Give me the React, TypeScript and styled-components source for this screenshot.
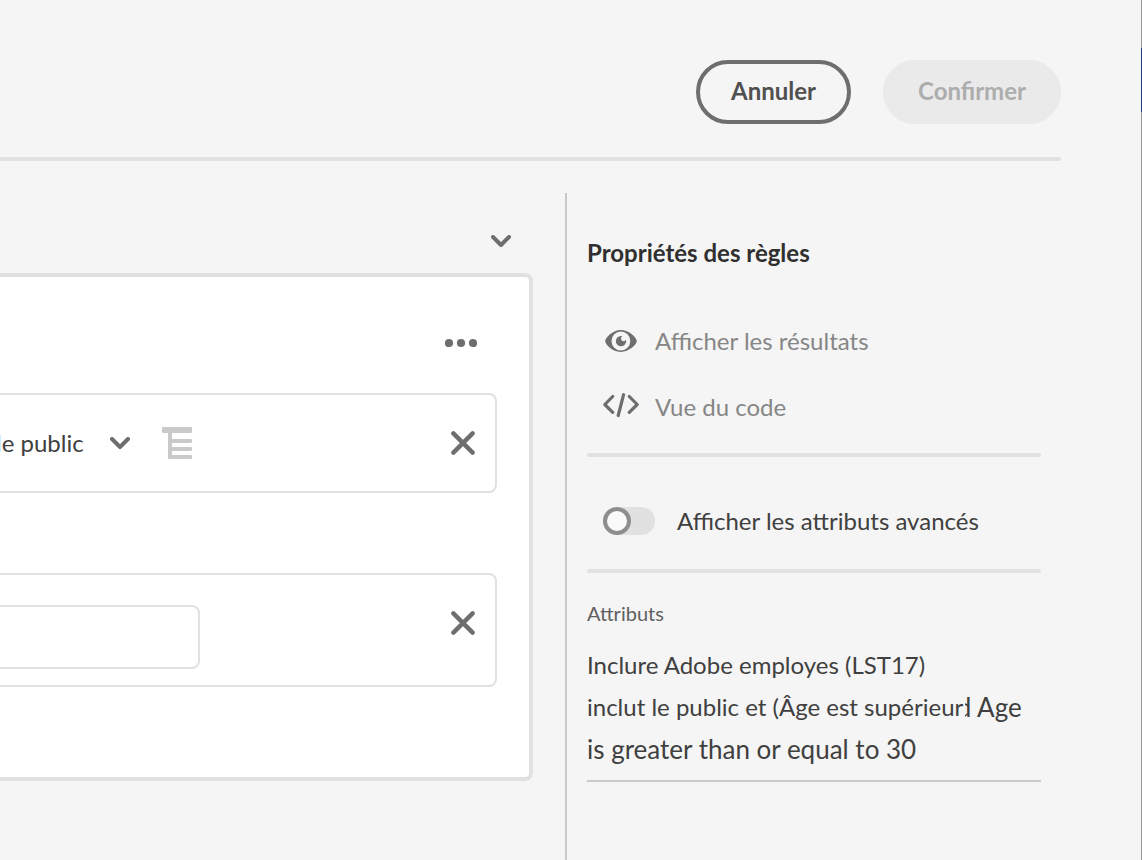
import React, { useState } from "react";
import styled, { createGlobalStyle } from "styled-components";

const GlobalStyle = createGlobalStyle`
  *, *::before { box-sizing: border-box; }
  body {
    margin: 0;
    background: #f5f5f5;
    color: #404040;
    font: 400 24px/32px Lato, "Open Sans", sans-serif;
  }
  button, input, select { font: inherit; color: inherit; margin: 0; }
`;

const Page = styled.div`
  display: flex;
  min-height: 100vh;
  overflow-x: hidden;
`;

const Content = styled.div`
  flex: 1;
  min-width: 0;
  display: flex;
  flex-direction: column;
  padding-right: 80px;
`;

const WindowEdge = styled.div`
  width: 1px;
  padding-top: 48px;
  background: #969696;
`;

const EdgeMarker = styled.div`
  height: 64px;
  background: #1d427c;
`;

const Header = styled.header`
  display: flex;
  justify-content: flex-end;
  gap: 32px;
  padding: 60px 0 33px;
`;

const ActionButton = styled.button<{ $width: number }>`
  width: ${(p) => p.$width}px;
  height: 64px;
  padding: 0 0 2px;
  border: 4px solid #6e6e6e;
  border-radius: 32px;
  background: transparent;
  color: #505050;
  font-weight: 700;
  cursor: pointer;

  &:disabled {
    border-color: #eaeaea;
    background: #eaeaea;
    color: #adadad;
    cursor: default;
  }
`;

const Rule = styled.hr<{ $bleed?: boolean }>`
  width: 100%;
  height: 4px;
  margin: 0;
  border: 0;
  border-radius: ${(p) => (p.$bleed ? "0 2px 2px 0" : "2px")};
  background: #e1e1e1;
`;

const Columns = styled.div`
  flex: 1;
  display: flex;
  gap: 32px;
  padding: 32px 20px 0 0;
`;

const Canvas = styled.main`
  flex: 1;
  min-width: 0;
`;

const IconButton = styled.button`
  display: flex;
  padding: 0;
  border: 0;
  background: none;
  color: #6e6e6e;
  cursor: pointer;
`;

const CanvasHeader = styled.div`
  display: flex;
  justify-content: flex-end;
  height: 80px;
  padding: 42px 22px 0 0;
  align-items: flex-start;
`;

const Card = styled.section`
  display: flex;
  flex-direction: column;
  height: 508px;
  margin-left: -4px;
  padding-right: 32px;
  border: 4px solid #e1e1e1;
  border-left: 0;
  border-radius: 0 8px 8px 0;
  background: #fff;
`;

const CardHeader = styled.div`
  display: flex;
  justify-content: flex-end;
  align-items: flex-start;
  height: 116px;
  padding: 61px 20px 0 0;
`;

const RuleRow = styled.div<{ $height: number }>`
  display: flex;
  align-items: flex-start;
  justify-content: space-between;
  height: ${(p) => p.$height}px;
  padding: 30px 20px 0 0;
  border: 2px solid #e1e1e1;
  border-left: 0;
  border-radius: 0 8px 8px 0;

  & + & {
    margin-top: 80px;
  }

  > button {
    padding: 6px 0;
  }
`;

const RowFields = styled.div`
  display: flex;
  align-items: center;
  gap: 32px;
`;

const SelectBox = styled.div`
  display: grid;
  align-items: center;
  width: 134px;
  color: #6e6e6e;

  > * {
    grid-area: 1 / 1;
  }

  svg {
    justify-self: end;
    pointer-events: none;
  }
`;

const Select = styled.select`
  appearance: none;
  width: 100%;
  height: 36px;
  padding: 0;
  border: 0;
  background: none;
  color: #404040;
`;

const ValueInput = styled.input`
  width: 204px;
  height: 64px;
  padding: 0 16px;
  border: 2px solid #e1e1e1;
  border-left: 0;
  border-radius: 0 8px 8px 0;
  background: #fff;
`;

const Sidebar = styled.aside`
  width: 476px;
  padding: 44px 0 0 20px;
  border-left: 2px solid #cacaca;
`;

const Title = styled.h2`
  margin: 0 0 56px;
  color: #303030;
  font-size: 24px;
  font-weight: 700;
`;

const LinkList = styled.nav`
  display: flex;
  flex-direction: column;
  gap: 34px;
  padding: 0 0 30px 16px;
`;

const PanelLink = styled.a`
  display: flex;
  align-items: center;
  gap: 16px;
  color: #868686;
  text-decoration: none;

  svg {
    color: #6e6e6e;
  }
`;

const ToggleRow = styled.label`
  display: flex;
  align-items: center;
  gap: 22px;
  padding: 48px 0 32px 16px;
`;

const Toggle = styled.input`
  appearance: none;
  width: 52px;
  height: 28px;
  border-radius: 14px;
  background: #e1e1e1;
  cursor: pointer;

  &::before {
    content: "";
    display: block;
    width: 28px;
    height: 28px;
    border: 4px solid #8e8e8e;
    border-radius: 50%;
    background: #fafafa;
  }

  &:checked::before {
    margin-left: auto;
  }
`;

const Caption = styled.h3`
  margin: 28px 0 19px;
  color: #606060;
  font-size: 20px;
  font-weight: 400;
  line-height: 24px;
`;

const Summary = styled.div`
  padding-bottom: 10px;
  border-bottom: 2px solid #cacaca;
  line-height: 42px;
`;

const SummaryLine = styled.div`
  display: flex;
  height: 42px;
  white-space: pre;
`;

const Large = styled.span`
  font-size: 26px;
`;

const CutLetter = styled.span`
  display: flex;
  justify-content: flex-end;
  width: 6px;
  margin-left: 2px;
  overflow: hidden;
  font-size: 26px;
`;

const Chevron = () => (
  <svg width="20" height="12" viewBox="0 0 20 12" fill="none" stroke="currentColor" strokeWidth="4" strokeLinecap="round" strokeLinejoin="round" aria-hidden="true">
    <path d="M2 2l8 8 8-8" />
  </svg>
);

const Cross = () => (
  <svg width="24" height="24" viewBox="0 0 24 24" fill="none" stroke="currentColor" strokeWidth="4.4" strokeLinecap="round" aria-hidden="true">
    <path d="M2.4 2.4l19.2 19.2M21.6 2.4L2.4 21.6" />
  </svg>
);

const Dots = () => (
  <svg width="32" height="10" viewBox="0 0 32 10" fill="currentColor" aria-hidden="true">
    <circle cx="4" cy="5" r="4.1" />
    <circle cx="16" cy="5" r="4.1" />
    <circle cx="28" cy="5" r="4.1" />
  </svg>
);

const Tree = () => (
  <svg width="30" height="32" viewBox="0 0 30 32" fill="#cacaca" aria-hidden="true">
    <rect width="30" height="6" rx="1" />
    <path d="M6 4h4v8h19a1 1 0 0 1 1 1v2a1 1 0 0 1-1 1H10v4h19a1 1 0 0 1 1 1v2a1 1 0 0 1-1 1H10v4h19a1 1 0 0 1 1 1v2a1 1 0 0 1-1 1H7a1 1 0 0 1-1-1z" />
  </svg>
);

const Eye = () => (
  <svg width="36" height="24" viewBox="0 0 36 24" aria-hidden="true">
    <path
      fill="currentColor"
      fillRule="evenodd"
      d="M17.7 1C9.6 1 2.2 8.8 2.2 12.1 2.2 15.6 9.5 23 17.7 23 26 23 33.8 15.5 33.8 12.1 33.8 8.7 26 1 17.7 1zM17.9 2.6a9.4 9.4 0 1 1 0 18.8 9.4 9.4 0 0 1 0-18.8z"
    />
    <path
      fill="currentColor"
      d="M18 9.8c0-1.200.7-2.200 1.400-2.700A5.200 5.200 0 0 0 18 6.900a5.200 5.200 0 1 0 5.200 5.200c0-.5-.1-1-.2-1.400-.5.9-1.300 1.500-2.500 1.500A2.500 2.500 0 0 1 18 9.800z"
    />
  </svg>
);

const Code = () => (
  <svg width="36" height="28" viewBox="0 0 36 28" fill="none" stroke="currentColor" strokeWidth="3.2" strokeLinecap="round" strokeLinejoin="round" aria-hidden="true">
    <path d="M9.700 3.500L1.800 11.500l7.900 7.900M26.300 3.500l7.900 8-7.900 7.900M20.600 1.700l-5.400 20.800" />
  </svg>
);

export default function App() {
  const [advanced, setAdvanced] = useState(false);
  const [value, setValue] = useState("");

  return (
    <Page>
      <GlobalStyle />
      <Content>
        <Header>
          <ActionButton type="button" $width={155}>Annuler</ActionButton>
          <ActionButton type="button" $width={178} disabled>Confirmer</ActionButton>
        </Header>
        <Rule $bleed />
        <Columns>
          <Canvas>
            <CanvasHeader>
              <IconButton type="button" aria-label="Réduire"><Chevron /></IconButton>
            </CanvasHeader>
            <Card>
              <CardHeader>
                <IconButton type="button" aria-label="Plus d’options"><Dots /></IconButton>
              </CardHeader>
              <RuleRow $height={100}>
                <RowFields>
                  <SelectBox>
                    <Select aria-label="Public">
                      <option>le public</option>
                    </Select>
                    <Chevron />
                  </SelectBox>
                  <Tree />
                </RowFields>
                <IconButton type="button" aria-label="Supprimer la règle"><Cross /></IconButton>
              </RuleRow>
              <RuleRow $height={114}>
                <ValueInput aria-label="Valeur" value={value} onChange={(e) => setValue(e.target.value)} />
                <IconButton type="button" aria-label="Supprimer la règle"><Cross /></IconButton>
              </RuleRow>
            </Card>
          </Canvas>
          <Sidebar>
            <Title>Propriétés des règles</Title>
            <LinkList>
              <PanelLink href="#resultats"><Eye />Afficher les résultats</PanelLink>
              <PanelLink href="#code"><Code />Vue du code</PanelLink>
            </LinkList>
            <Rule />
            <ToggleRow>
              <Toggle type="checkbox" checked={advanced} onChange={(e) => setAdvanced(e.target.checked)} />
              Afficher les attributs avancés
            </ToggleRow>
            <Rule />
            <Caption>Attributs</Caption>
            <Summary>
              <SummaryLine>Inclure Adobe employes (LST17)</SummaryLine>
              <SummaryLine>
                inclut le public et (Âge est supérieur
                <CutLetter>d</CutLetter>
                <Large> Age</Large>
              </SummaryLine>
              <SummaryLine><Large>is greater than or equal to 30</Large></SummaryLine>
            </Summary>
          </Sidebar>
        </Columns>
      </Content>
      <WindowEdge>
        <EdgeMarker />
      </WindowEdge>
    </Page>
  );
}
